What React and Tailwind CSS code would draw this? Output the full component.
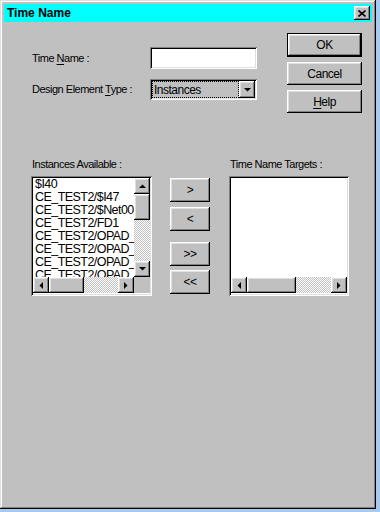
import React from 'react';

const raised =
  'shadow-[inset_-1px_-1px_#000,inset_1px_1px_#fff,inset_-2px_-2px_#808080,inset_2px_2px_#dfdfdf]';
const sunken =
  'shadow-[inset_1px_1px_#808080,inset_-1px_-1px_#fff,inset_2px_2px_#000,inset_-2px_-2px_#dfdfdf]';
const dither =
  'bg-[image:repeating-conic-gradient(#fff_0_25%,#c0c0c0_0_50%)] bg-[length:2px_2px]';

const Tri = ({ dir }) => {
  const pts = {
    up: '0,4 3.5,0.5 7,4',
    down: '0,0 7,0 3.5,3.5',
    left: '4,0 4,7 0.5,3.5',
    right: '0,0 0,7 3.5,3.5',
  }[dir];
  const vertical = dir === 'up' || dir === 'down';
  return (
    <svg width={vertical ? 7 : 4} height={vertical ? 4 : 7} viewBox={vertical ? '0 0 7 4' : '0 0 4 7'}>
      <polygon points={pts} fill="#000" />
    </svg>
  );
};

const ScrollBtn = ({ dir }) => (
  <div className={`w-[16px] h-[16px] shrink-0 bg-[#c0c0c0] flex items-center justify-center ${raised}`}>
    <Tri dir={dir} />
  </div>
);

const HScroll = ({ thumb }) => (
  <div className="flex h-[16px] flex-1">
    <ScrollBtn dir="left" />
    <div className={`h-[16px] shrink-0 bg-[#c0c0c0] ${raised}`} style={{ width: thumb }} />
    <div className={`flex-1 ${dither}`} />
    <ScrollBtn dir="right" />
  </div>
);

const Button = ({ children, className = '' }) => (
  <div
    className={`bg-[#c0c0c0] flex items-center justify-center text-[12px] tracking-[-0.5px] text-black ${raised} ${className}`}
  >
    {children}
  </div>
);

const items = [
  '$I40',
  'CE_TEST2/$I47',
  'CE_TEST2/$Net0005',
  'CE_TEST2/FD1',
  'CE_TEST2/OPAD_D0',
  'CE_TEST2/OPAD_R0',
  'CE_TEST2/OPAD_U0',
  'CE_TEST2/OPAD_F0',
];

const App = () => {
  return (
    <div className="w-[380px] h-[512px] bg-[#a6caf0] font-['Liberation_Sans',Arial,sans-serif] text-black">
      <div
        className={`w-[376px] h-[509px] bg-[#c0c0c0] p-[4px] flex flex-col shadow-[inset_-1px_-1px_#000,inset_1px_1px_#dfdfdf,inset_-2px_-2px_#808080,inset_2px_2px_#fff]`}
      >
        {/* title bar */}
        <div className="h-[18px] bg-[#00ffff] flex items-center justify-between pl-[3px] pr-[2px]">
          <span className="text-[12px] font-bold leading-none">Time Name</span>
          <div className={`w-[16px] h-[14px] bg-[#c0c0c0] flex items-center justify-center ${raised}`}>
            <svg width="8" height="7" viewBox="0 0 8 7">
              <path d="M0.5 0.5 L7.5 6.5 M7.5 0.5 L0.5 6.5" stroke="#000" strokeWidth="1.6" />
            </svg>
          </div>
        </div>

        {/* top section */}
        <div className="flex">
          <div className="ml-[28px] mt-[25px] flex flex-col gap-[10px]">
            <div className="flex items-center h-[22px]">
              <div className="w-[118px] text-[11px] tracking-[-0.5px]">
                Time <u className="underline-offset-2">N</u>ame :
              </div>
              <div className={`w-[107px] h-[22px] bg-white ${sunken}`} />
            </div>
            <div className="flex items-center h-[21px]">
              <div className="w-[118px] text-[11px] tracking-[-0.5px]">
                Design Element <u className="underline-offset-2">T</u>ype :
              </div>
              <div className={`w-[107px] h-[21px] bg-[#c0c0c0] p-[2px] flex ${sunken}`}>
                <div className="flex-1 border border-dotted border-black flex items-center pl-[1px] text-[12px] tracking-[-0.5px] leading-none">
                  Instances
                </div>
                <div className={`w-[16px] bg-[#c0c0c0] flex items-center justify-center ${raised}`}>
                  <Tri dir="down" />
                </div>
              </div>
            </div>
          </div>

          <div className="ml-[30px] mt-[11px] flex flex-col w-[75px]">
            <Button className="h-[24px] border border-black">OK</Button>
            <Button className="h-[23px] mt-[5px]">Cancel</Button>
            <Button className="h-[23px] mt-[5px]">
              <span>
                <u className="underline-offset-2">H</u>elp
              </span>
            </Button>
          </div>
        </div>

        {/* lists section */}
        <div className="mt-[45px] flex">
          <div className="ml-[27px] flex flex-col">
            <div className="h-[18px] pl-[1px] text-[11px] leading-[13px] tracking-[-0.5px]">Instances Available :</div>
            <div className={`w-[121px] h-[120px] bg-white p-[2px] flex flex-col ${sunken}`}>
              <div className="flex h-[99px]">
                <div className="flex-1 overflow-hidden pl-[2px] text-[12.5px] leading-[13px] tracking-[-0.55px]">
                  {items.map((it) => (
                    <div key={it} className="whitespace-nowrap">
                      {it}
                    </div>
                  ))}
                </div>
                <div className="w-[16px] flex flex-col">
                  <ScrollBtn dir="up" />
                  <div className={`h-[26px] bg-[#c0c0c0] ${raised}`} />
                  <div className={`flex-1 ${dither}`} />
                  <ScrollBtn dir="down" />
                </div>
              </div>
              <div className="flex h-[16px] bg-[#c0c0c0]">
                <HScroll thumb={35} />
                <div className="w-[16px] h-[16px] bg-[#c0c0c0]" />
              </div>
            </div>
          </div>

          <div className="ml-[18px] pt-[20px] flex flex-col w-[40px] text-[11px]">
            <Button className="h-[24px]">&gt;</Button>
            <Button className="h-[24px] mt-[5px]">&lt;</Button>
            <Button className="h-[24px] mt-[11px]">&gt;&gt;</Button>
            <Button className="h-[24px] mt-[4px]">&lt;&lt;</Button>
          </div>

          <div className="ml-[19px] flex flex-col">
            <div className="h-[18px] pl-[1px] text-[11px] leading-[13px] tracking-[-0.5px]">Time Name Targets :</div>
            <div className={`w-[120px] h-[120px] bg-white p-[2px] flex flex-col ${sunken}`}>
              <div className="h-[99px]" />
              <div className="flex h-[16px]">
                <HScroll thumb={49} />
              </div>
            </div>
          </div>
        </div>
      </div>
    </div>
  );
};

export default App;
